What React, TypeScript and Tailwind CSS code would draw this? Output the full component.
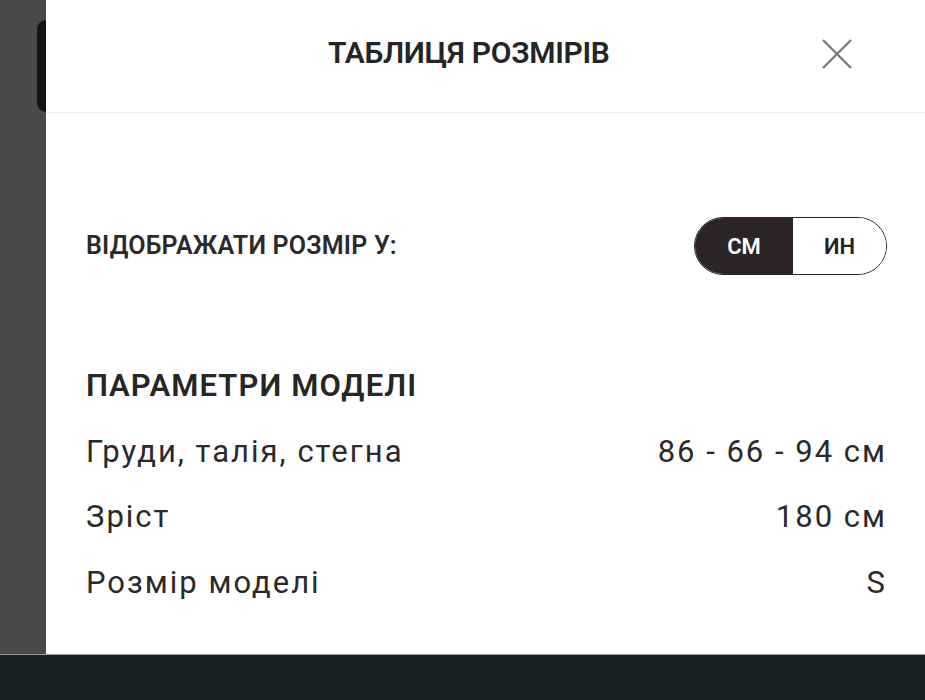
import React, { useState } from "react";

const rows = [
  { label: "Груди, талія, стегна", value: "86 - 66 - 94 см" },
  { label: "Зріст", value: "180 см" },
  { label: "Розмір моделі", value: "S" },
];

const SizeToggle = () => {
  const [unit, setUnit] = useState("cm");

  return (
    <div className="flex h-[58px] w-[193px] overflow-hidden rounded-full border-[1.5px] border-[#2b2424]">
      <button
        onClick={() => setUnit("cm")}
        className={
          unit === "cm"
            ? "w-[98px] bg-[#2d2525] text-[22px] font-semibold text-white"
            : "w-[98px] bg-white text-[22px] font-semibold text-[#222]"
        }
      >
        СМ
      </button>
      <button
        onClick={() => setUnit("in")}
        className={
          unit === "in"
            ? "flex-1 bg-[#2d2525] text-[22px] font-semibold text-white"
            : "flex-1 bg-white text-[22px] font-semibold text-[#222]"
        }
      >
        ИН
      </button>
    </div>
  );
};

const App = () => {
  return (
    <div className="flex h-[700px] w-[925px] flex-col bg-[#172323] font-['Roboto',_'Liberation_Sans',_sans-serif] text-[#262626]">
      <div className="flex h-[654px]">
        {/* page behind the modal */}
        <div className="flex w-[46px] justify-end bg-[#4a4a4a] pt-[20px]">
          <div className="h-[92px] w-[9px] rounded-l-[10px] bg-[#141414]" />
        </div>

        <div className="flex flex-1 flex-col bg-white">
          {/* header */}
          <div className="flex h-[113px] items-center border-b border-[#ececec] pb-[8px]">
            <h2 className="ml-[282px] text-[30px] font-semibold tracking-[-0.3px] text-[#252525]">
              ТАБЛИЦЯ РОЗМІРІВ
            </h2>
            <button className="ml-auto mr-[71px] mt-[4px] text-[#7b7b7b]">
              <svg width="34" height="34" viewBox="0 0 34 34" fill="none">
                <path
                  d="M3 3L31 31M31 3L3 31"
                  stroke="currentColor"
                  strokeWidth="2.4"
                />
              </svg>
            </button>
          </div>

          {/* body */}
          <div className="flex flex-col pl-[40px] pr-[38px]">
            <div className="mt-[104px] flex h-[58px] items-center justify-between">
              <span className="text-[25px] font-semibold tracking-[0.2px] text-[#2a2a2a]">
                ВІДОБРАЖАТИ РОЗМІР У:
              </span>
              <SizeToggle />
            </div>

            <div className="mt-[89px] flex h-[44px] items-center">
              <h3 className="text-[31px] font-semibold tracking-[1.1px] text-[#262626]">
                ПАРАМЕТРИ МОДЕЛІ
              </h3>
            </div>

            <div className="mt-[11px] flex flex-col">
              {rows.map((row) => (
                <div
                  key={row.label}
                  className="flex h-[65.5px] items-center justify-between text-[31px] tracking-[2px] text-[#2a2a2a]"
                >
                  <span>{row.label}</span>
                  <span>{row.value}</span>
                </div>
              ))}
            </div>
          </div>
        </div>
      </div>
      <div className="h-px bg-[#9a9a9a]" />
    </div>
  );
};

export default App;
